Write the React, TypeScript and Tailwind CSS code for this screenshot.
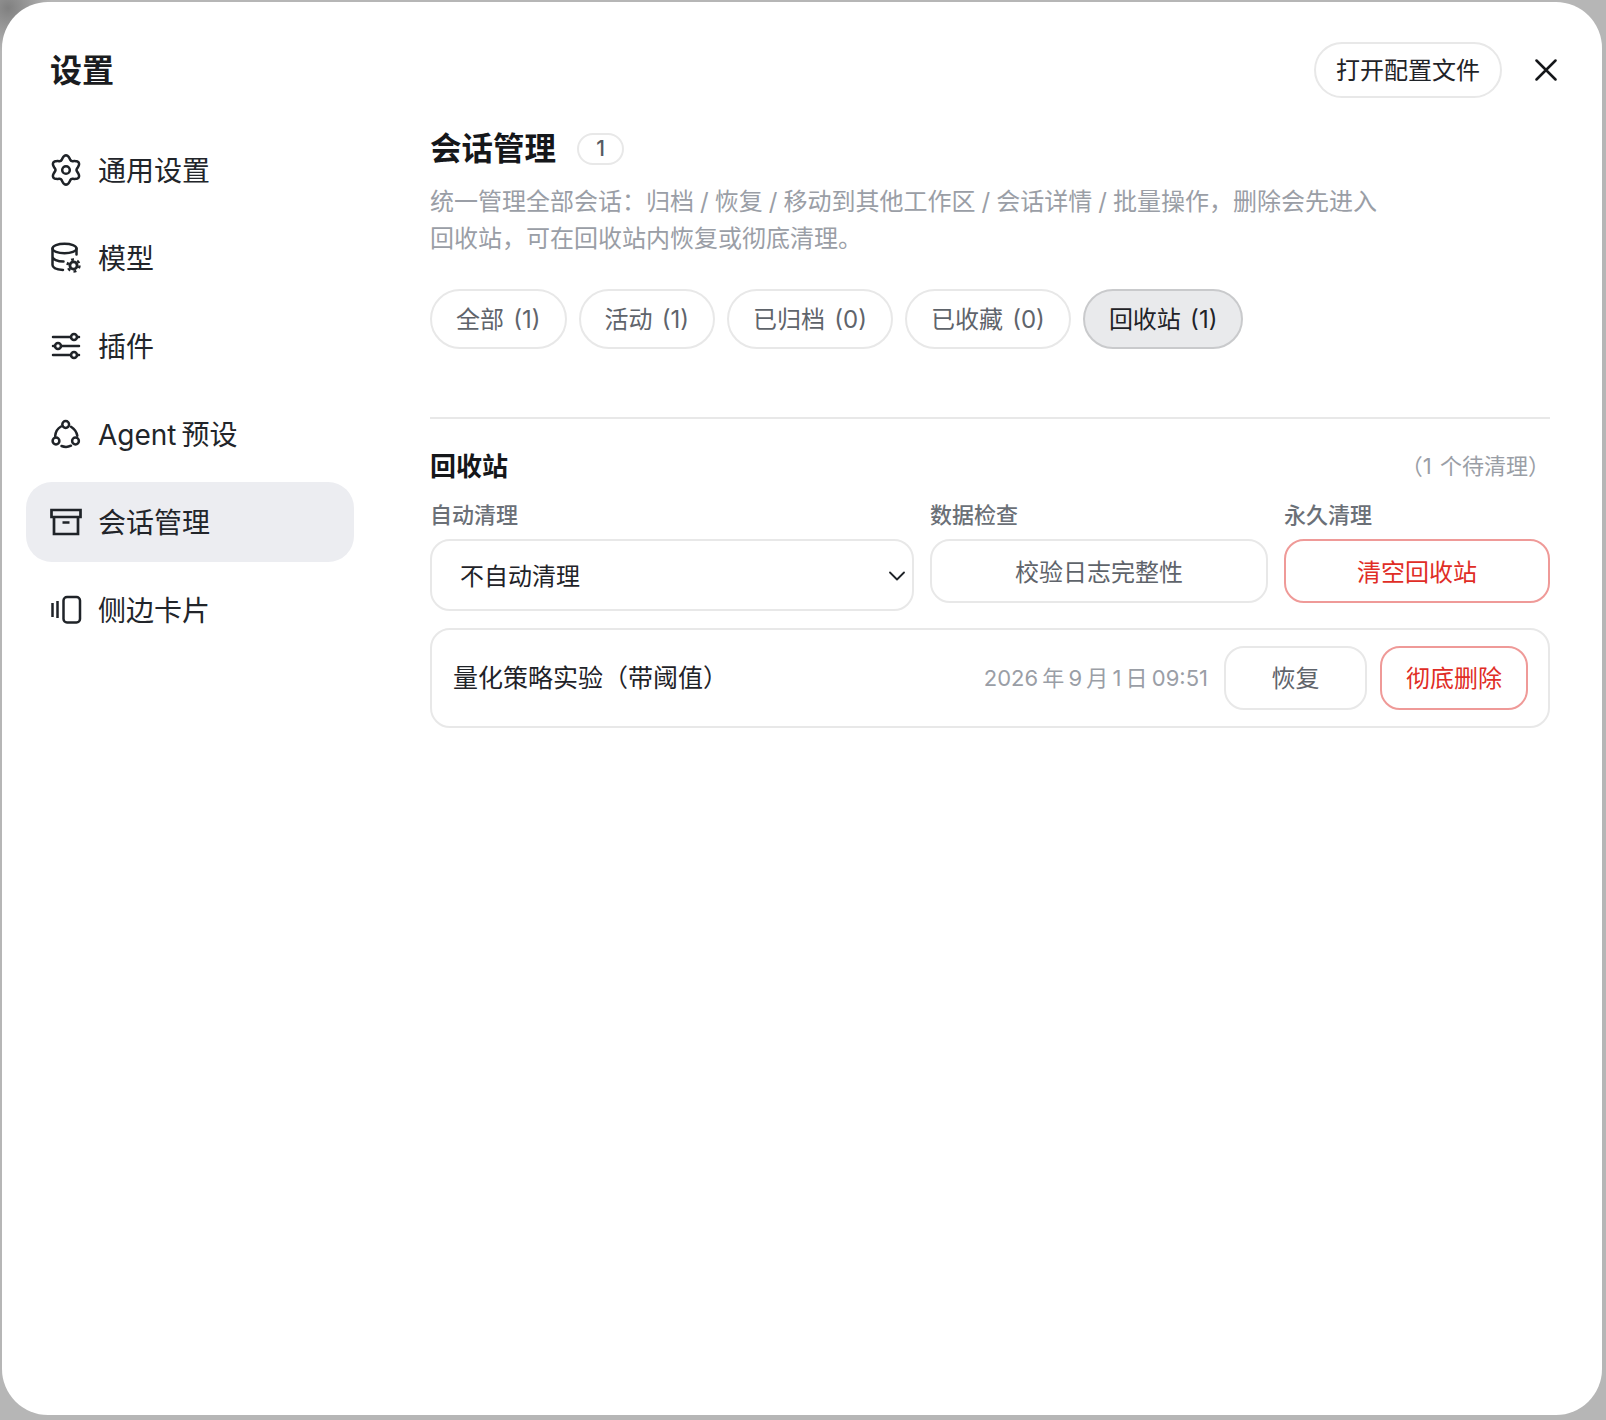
import React from "react";

const S = ({ children }: { children: React.ReactNode }) => (
  <svg viewBox="0 0 32 32" className="w-8 h-8 shrink-0" fill="none" stroke="#1f2328" strokeWidth="2.500" strokeLinecap="round" strokeLinejoin="round">
    {children}
  </svg>
);

const flower = (() => {
  let d = "";
  for (let i = 0; i < 120; i++) {
    const t = (i / 120) * Math.PI * 2;
    const r = 12.6 + 2.1 * Math.cos(6 * t);
    const x = 16 + r * Math.sin(t);
    const y = 16 - r * Math.cos(t);
    d += `${i ? "L" : "M"}${x.toFixed(2)} ${y.toFixed(2)}`;
  }
  return d + "Z";
})();

const Gear = () => (
  <S>
    <path d={flower} />
    <circle cx="16" cy="16" r="3.800" />
  </S>
);
const Model = () => (
  <S>
    <ellipse cx="14.500" cy="6.500" rx="12" ry="4.800" />
    <path d="M2.500 6.500v16.500c0 2.500 4 4.500 10.500 5M2.500 14.500c0 2.800 5 5 11 5M26.500 6.500v6" />
    <circle cx="23.500" cy="23.500" r="3.600" strokeWidth="2.800" />
    <circle cx="23.500" cy="23.500" r="6" strokeDasharray="2.900 3.380" strokeWidth="2.400" strokeLinecap="butt" />
  </S>
);
const Sliders = () => (
  <S>
    <path d="M3 7h18M27 7h2M3 16h2M11 16h18M3 25h18M27 25h2" />
    <circle cx="24" cy="7" r="3" />
    <circle cx="8" cy="16" r="3" />
    <circle cx="24" cy="25" r="3" />
  </S>
);
const AgentI = () => (
  <S>
    <circle cx="15.700" cy="6.500" r="3.400" />
    <circle cx="6" cy="23" r="3.400" />
    <circle cx="25.500" cy="23" r="3.400" />
    <path d="M11 8.500C7.500 10.500 5.500 14 5.200 18M21 8.800c3.200 2 5.600 5 6.300 9M11.500 28c3 1.200 6.500 1.200 9.500-.300" />
  </S>
);
const Archive = () => (
  <S>
    <path d="M1.500 4h29v7h-29zM4 11v17h24V11M12.500 16.500h7" strokeLinecap="butt" strokeLinejoin="miter" strokeWidth="2.700" />
  </S>
);
const Card = () => (
  <S>
    <rect x="13.500" y="3" width="16.500" height="25.500" rx="3.500" />
    <path d="M7.500 7v17M2.500 9v14" strokeLinecap="butt" />
  </S>
);

const nav: [React.ReactNode, string, boolean][] = [
  [<Gear />, "通用设置", false],
  [<Model />, "模型", false],
  [<Sliders />, "插件", false],
  [<AgentI />, "Agent 预设", false],
  [<Archive />, "会话管理", true],
  [<Card />, "侧边卡片", false],
];
const pills: [string, boolean][] = [
  ["全部 (1)", false],
  ["活动 (1)", false],
  ["已归档 (0)", false],
  ["已收藏 (0)", false],
  ["回收站 (1)", true],
];

export default function App() {
  return (
    <div className="h-[1420px] w-full overflow-hidden bg-[#b6b6b6] bg-[radial-gradient(circle_at_8px_8px,#808080_0,#b6b6b6_44px)] p-[2px] pr-[4px] pb-[5px] font-['Inter','Noto_Sans_CJK_SC',sans-serif]">
      <div className="flex h-full w-full rounded-[46px] bg-white">
        <aside className="w-[428px] shrink-0 pl-[24px] pr-[76px] pt-[47px]">
          <h1 className="h-[44px] pl-[24px] text-[32px] leading-[44px] font-semibold text-[#1a1c20]">设置</h1>
          <nav className="mt-[37px] flex flex-col gap-[8px]">
            {nav.map(([icon, label, active]) => (
              <div key={label} className={`flex h-[80px] items-center gap-[16px] rounded-[26px] pl-[24px] text-[28px] text-[#22252a] [word-spacing:-3px] ${active ? "bg-[#ecedf1]" : ""}`}>
                {icon}
                <span className="pt-[1px]">{label}</span>
              </div>
            ))}
          </nav>
        </aside>
        <main className="min-w-0 flex-1 pr-[52px]">
          <div className="flex h-[96px] items-end justify-end">
            <button className="mr-[-1px] h-[56px] rounded-full border-2 border-[#e8e8e8] px-[20px] pt-[1px] text-[24px] text-[#1f2328]">打开配置文件</button>
            <svg viewBox="0 0 22 22" className="mb-[17px] ml-[34px] mr-[-7px] h-[22px] w-[22px]" fill="none" stroke="#15171a" strokeWidth="2.500" strokeLinecap="round">
              <path d="M1.500 1.500l19 19M20.500 1.500l-19 19" />
            </svg>
          </div>
          <div className="mt-[31px] flex items-center gap-[21px]">
            <h2 className="text-[31.500px] leading-[40px] font-bold text-[#15171a]">会话管理</h2>
            <span className="flex h-[32px] w-[47px] items-center justify-center rounded-full border-2 border-[#e8e8e8] text-[21px] font-medium text-[#555b63]">1</span>
          </div>
          <p className="mt-[14px] max-w-[960px] text-[24px] leading-[37px] text-[#9a9ea6] [word-spacing:-0.700px]">统一管理全部会话：归档 / 恢复 / 移动到其他工作区 / 会话详情 / 批量操作，删除会先进入回收站，可在回收站内恢复或彻底清理。</p>
          <div className="mt-[32px] flex gap-[12px]">
            {pills.map(([p, active]) => (
              <button key={p} className={`h-[60px] rounded-full border-2 px-[24px] pt-[2px] text-[24px] [word-spacing:2.500px] ${active ? "border-[#c9cacc] bg-[#e9eaec] text-[#1f2328]" : "border-[#e8e8e8] text-[#5f646b]"}`}>{p}</button>
            ))}
          </div>
          <div className="mt-[68px] h-[2px] bg-[#e8e8e8]" />
          <div className="mt-[29px] flex h-[36px] items-center justify-between">
            <h3 className="text-[26px] font-bold text-[#15171a]">回收站</h3>
            <span className="text-[22px] text-[#9a9ea6] [word-spacing:2px]">（1 个待清理）</span>
          </div>
          <div className="mt-[17px] grid grid-cols-[484px_338px_266px] gap-x-[16px]">
            <div className="flex flex-col gap-[10px]">
              <label className="text-[22px] leading-[28px] font-medium text-[#6b7077]">自动清理</label>
              <div className="flex h-[72px] items-center justify-between rounded-[20px] border-2 border-[#e8e8e8] pl-[28px] pr-[7px] pt-[1px] text-[24px] text-[#1f2328]">
                <span className="pt-[2px]">不自动清理</span>
                <svg viewBox="0 0 16 10" className="h-[10px] w-[16px]" fill="none" stroke="#1f2328" strokeWidth="1.800" strokeLinecap="round" strokeLinejoin="round"><path d="M1 1.500l7 7 7-7" /></svg>
              </div>
            </div>
            <div className="flex flex-col gap-[10px]">
              <label className="text-[22px] leading-[28px] font-medium text-[#6b7077]">数据检查</label>
              <button className="h-[64px] rounded-[20px] border-2 border-[#e8e8e8] pt-[3px] text-[24px] text-[#5f646b]">校验日志完整性</button>
            </div>
            <div className="flex flex-col gap-[10px]">
              <label className="text-[22px] leading-[28px] font-medium text-[#6b7077]">永久清理</label>
              <button className="h-[64px] rounded-[20px] border-2 border-[#ef9a98] pt-[3px] text-[24px] text-[#e02d26]">清空回收站</button>
            </div>
          </div>
          <div className="mt-[17px] flex h-[100px] items-center rounded-[20px] border-2 border-[#e8e8e8] pl-[21px] pr-[20px]">
            <span className="flex-1 pt-[1px] text-[25px] text-[#1f2328]">量化策略实验（带阈值）</span>
            <span className="text-[22px] text-[#9a9ea6] [word-spacing:-2px]">2026 年 9 月 1 日 09:51</span>
            <button className="ml-[16px] h-[64px] w-[143px] rounded-[20px] border-2 border-[#e8e8e8] pt-[1px] text-[24px] text-[#5f646b]">恢复</button>
            <button className="ml-[13px] h-[64px] w-[148px] rounded-[20px] border-2 border-[#ef9a98] pt-[1px] text-[24px] text-[#e02d26]">彻底删除</button>
          </div>
        </main>
      </div>
    </div>
  );
}
